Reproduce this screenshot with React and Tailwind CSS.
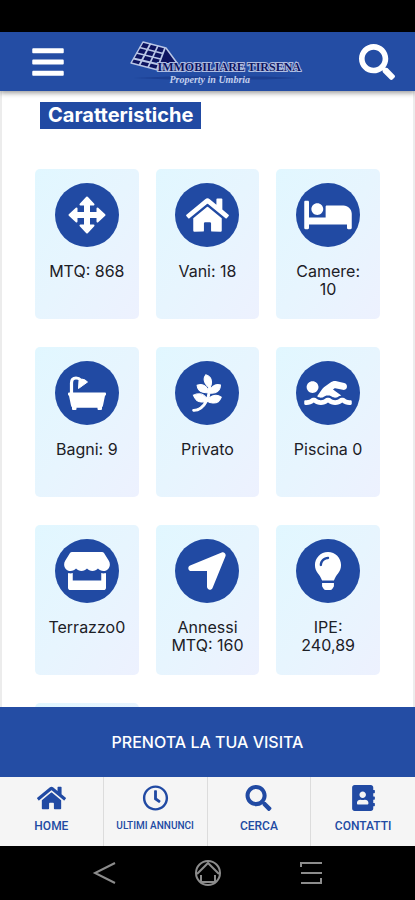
import React from "react";
import {
  FaBars,
  FaSearch,
  FaHome,
  FaBed,
  FaPagelines,
  FaSwimmer,
  FaStore,
  FaLightbulb,
  FaRegClock,
  FaAddressBook,
} from "react-icons/fa";
import { FaLocationArrow } from "react-icons/fa6";

function ArrowsIcon({ className }) {
  return (
    <svg
      className={className}
      viewBox="0 0 38 38"
      fill="currentColor"
      stroke="currentColor"
      strokeWidth="2"
      strokeLinejoin="round"
      aria-hidden="true"
    >
      <path d="M19 1.500 L25.500 8.500 H21 V17 H29.500 V12.500 L36.500 19 L29.500 25.500 V21 H21 V29.500 H25.500 L19 36.500 L12.500 29.500 H17 V21 H8.500 V25.500 L1.500 19 L8.500 12.500 V17 H17 V8.500 H12.500Z" />
    </svg>
  );
}

function BathIcon({ className }) {
  return (
    <svg className={className} viewBox="0 0 38 38" fill="currentColor" aria-hidden="true">
      <path
        d="M3.500 20 V9 Q3.500 4 8 4 Q11 4 12.500 6"
        fill="none"
        stroke="currentColor"
        strokeWidth="3.200"
      />
      <path d="M10.500 14.500 L11 6.500 Q14 4 17 6 L19.500 8 Z" stroke="currentColor" strokeWidth="1" strokeLinejoin="round" />
      <path d="M1 18.500 H37 Q38 18.500 38 19.500 V20.500 Q38 21.500 37 21.700 L35 31.500 Q34.500 33 34 33.300 V35 Q34 36 33 36 H30.500 Q29.500 36 29.500 35 V33.800 H8.500 V35 Q8.500 36 7.500 36 H5 Q4 36 4 35 V33.300 Q3.500 33 3 31.500 L1 21.700 Q0 21.500 0 20.500 V19.500 Q0 18.500 1 18.500Z" />
    </svg>
  );
}

const features = [
  { icon: ArrowsIcon, label: "MTQ: 868", size: "h-[38px] w-[38px]" },
  { icon: FaHome, label: "Vani: 18", size: "h-[38px] w-[43px]" },
  { icon: FaBed, label: "Camere: 10", size: "h-[38px] w-[48px]" },
  { icon: BathIcon, label: "Bagni: 9", size: "h-[38px] w-[38px]" },
  { icon: FaPagelines, label: "Privato", size: "h-[38px] w-[38px] [stroke-width:14]" },
  { icon: FaSwimmer, label: "Piscina 0", size: "h-[38px] w-[48px]" },
  { icon: FaStore, label: "Terrazzo0", size: "h-[38px] w-[46px]" },
  { icon: FaLocationArrow, label: "Annessi MTQ: 160", size: "h-[46px] w-[46px]" },
  { icon: FaLightbulb, label: "IPE: 240,89", size: "h-[38px] w-[38px]" },
];

const tabs = [
  { icon: FaHome, label: "HOME", size: "text-[12px]" },
  { icon: FaRegClock, label: "ULTIMI ANNUNCI", size: "text-[10px]" },
  { icon: FaSearch, label: "CERCA", size: "text-[12px]" },
  { icon: FaAddressBook, label: "CONTATTI", size: "text-[12px]" },
];

function Logo() {
  return (
    <a href="#home" className="relative block h-[44px] w-[176px]" aria-label="Immobiliare Tirsena">
      <svg className="absolute inset-0" width="176" height="44" viewBox="0 0 176 44" aria-hidden="true">
        <path d="M9 38 L45 36.500 H139 L173 38 L139 39.500 H45Z" fill="#1c3f92" />
        <path d="M18 2 L41 8 L52 23 L39 24 L33 30 L6 23Z" fill="#0d1460" stroke="#b9c6e6" strokeWidth="1.500" strokeLinejoin="round" />
        <path
          d="M25.500 3.500 L14.500 25 M33 5.500 L23 27.500 M40 8 L32 29 M14.500 7.500 L38 13.500 M11.500 13 L35.500 19 M8.500 18.500 L34 24.500"
          stroke="#b9c6e6"
          strokeWidth="1.800"
          fill="none"
        />
      </svg>
      <span className="absolute left-[33px] top-[21px] flex flex-col whitespace-nowrap font-['Liberation_Serif',serif] font-bold">
        <span className="text-[12px] leading-[13px] text-[#0d1460] [-webkit-text-stroke:2px_#aebde2] [paint-order:stroke_fill]">
          IMMOBILIARE TIRSENA
        </span>
        <span className="pl-3 text-[10px] leading-[12px] italic text-[#c3d0ee]">Property in Umbria</span>
      </span>
    </a>
  );
}

function Feature({ icon: Icon, label, size }) {
  return (
    <li className="flex h-[150px] flex-col items-center rounded-[5px] bg-linear-to-br from-[#e1f7ff] via-[#e7f5fe] to-[#edf1fe] px-3 pt-[14px]">
      <span className="flex h-16 w-16 shrink-0 items-center justify-center rounded-full bg-[#214aa3] text-white">
        <Icon className={size} />
      </span>
      <span className="mt-[15px] text-center text-[16px] leading-[18px] text-[#1c2026]">{label}</span>
    </li>
  );
}

export default function App() {
  return (
    <div className="flex h-screen flex-col overflow-hidden bg-white font-['Inter',sans-serif]">
      <div className="h-8 shrink-0 bg-black" />
      <header className="z-10 flex h-[59px] shrink-0 items-center justify-between bg-[#244da4] pl-[30px] pr-5 shadow-[0_2px_5px_rgba(0,0,0,0.4)]">
        <button type="button" aria-label="Menu" className="text-white">
          <FaBars className="h-9 w-9" />
        </button>
        <Logo />
        <button type="button" aria-label="Cerca" className="text-white">
          <FaSearch className="h-9 w-9" />
        </button>
      </header>

      <main className="min-h-0 flex-1 overflow-hidden border-x-2 border-[#ececec] px-[33px] pt-[11px]">
        <h2 className="ml-[5px] w-fit bg-[#214aa3] px-2 text-[20px] leading-[27px] font-bold text-white">
          Caratteristiche
        </h2>
        <ul className="mt-10 grid grid-cols-3 gap-x-[17px] gap-y-7">
          {features.map((f) => (
            <Feature key={f.label} icon={f.icon} label={f.label} size={f.size} />
          ))}
          <li className="h-[150px] rounded-[5px] bg-linear-to-br from-[#e1f7ff] to-[#edf1fe]" />
        </ul>
      </main>

      <button type="button" className="h-[70px] shrink-0 bg-[#244da4] text-[16px] font-medium text-white">
        PRENOTA LA TUA VISITA
      </button>

      <nav className="grid h-[69px] shrink-0 grid-cols-4 bg-[#f5f5f5] font-['Roboto',sans-serif] font-medium text-[#214aa3]">
        {tabs.map(({ icon: Icon, label, size }) => (
          <a
            key={label}
            href="#tab"
            className="flex flex-col items-center border-r border-[#dcdcdc] pt-2 last:border-r-0"
          >
            <Icon className="h-[26px] w-[29px]" />
            <span className={`mt-2 whitespace-nowrap leading-[14px] ${size}`}>{label}</span>
          </a>
        ))}
      </nav>

      <div className="flex h-[54px] shrink-0 items-center justify-between bg-black px-[92px] text-[#8c8c8c]">
        <button type="button" aria-label="Indietro">
          <svg width="24" height="24" viewBox="0 0 24 24" fill="none" stroke="currentColor" strokeWidth="2">
            <path d="M23 2 L3 12 L23 22" />
          </svg>
        </button>
        <button type="button" aria-label="Home">
          <svg width="28" height="28" viewBox="0 0 28 28" fill="none" stroke="currentColor" strokeWidth="2">
            <circle cx="14" cy="14" r="12" />
            <path d="M3 15 L14 4 L25 15 M11 23 H7 V16 M17 23 H21 V16 M7 23 H21" />
          </svg>
        </button>
        <button type="button" aria-label="Recenti">
          <svg width="24" height="24" viewBox="0 0 24 24" fill="none" stroke="currentColor" strokeWidth="2">
            <path d="M2 6 V2 H23 M2 12 H23 M2 22 H22 V17" />
          </svg>
        </button>
      </div>
    </div>
  );
}
